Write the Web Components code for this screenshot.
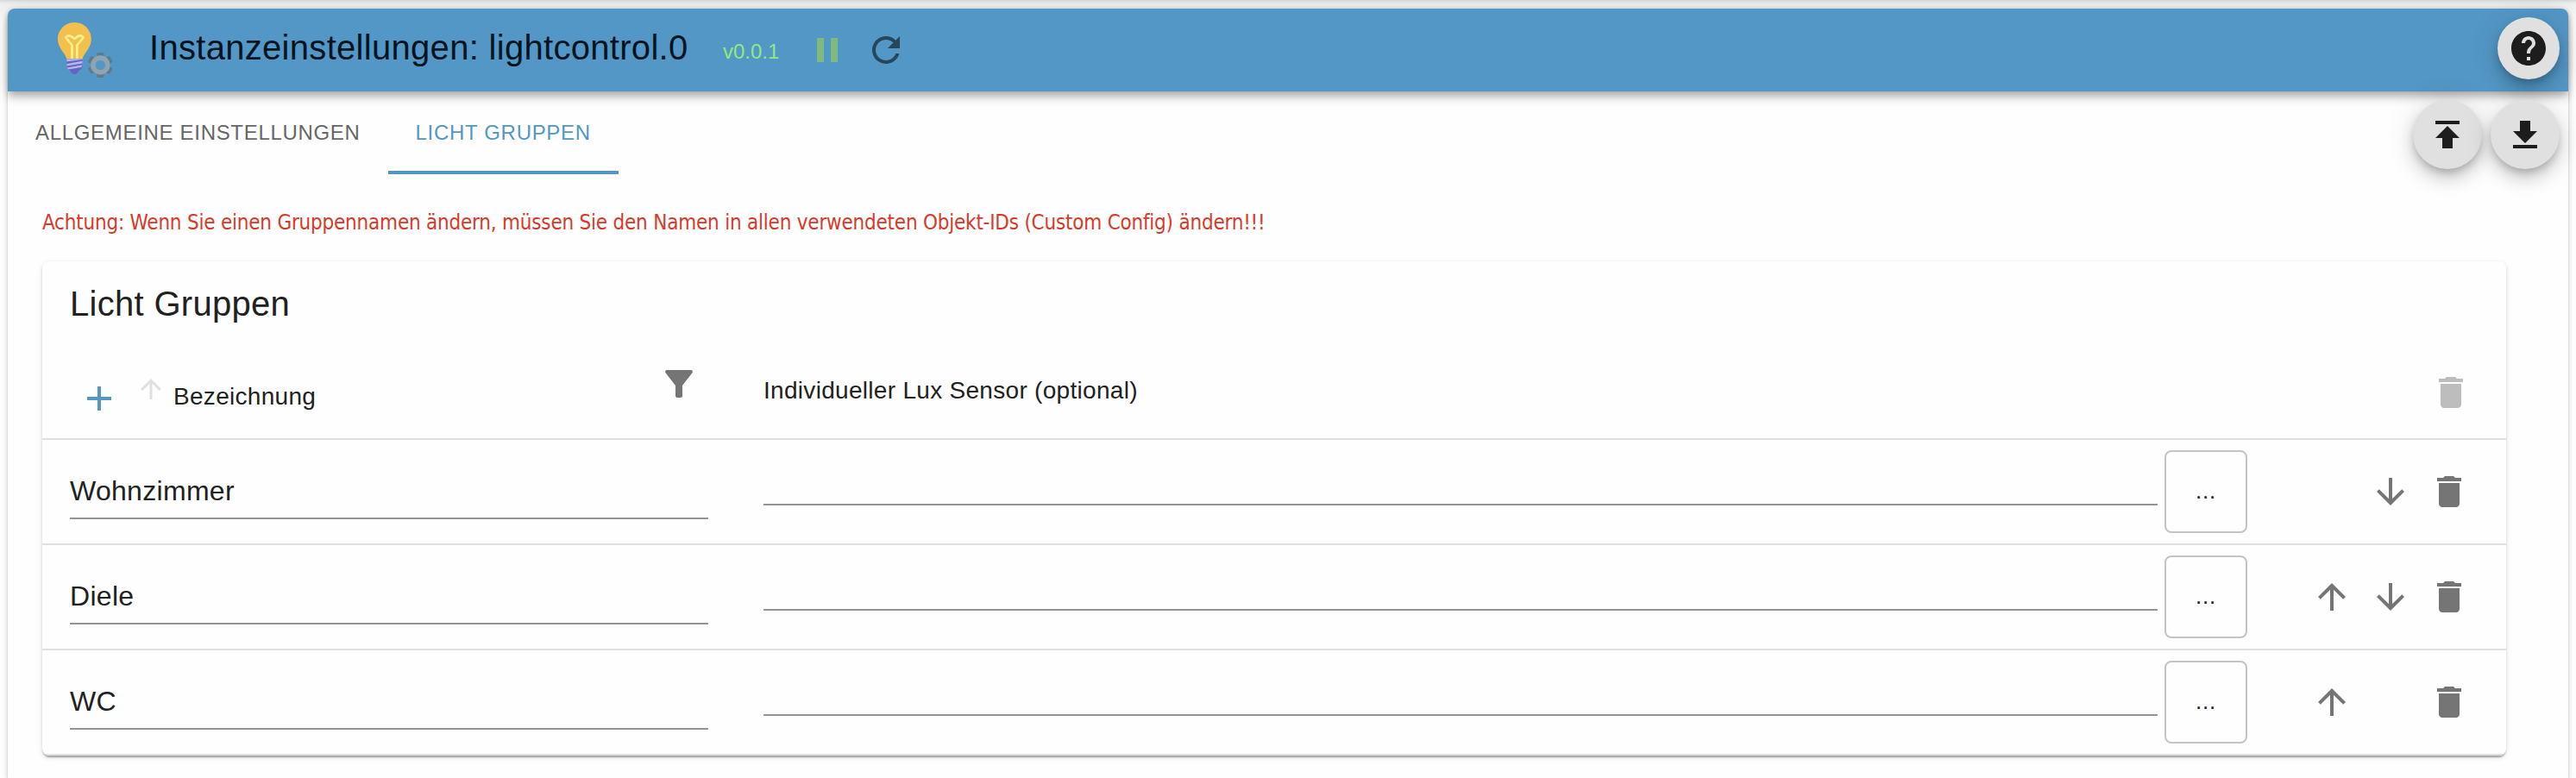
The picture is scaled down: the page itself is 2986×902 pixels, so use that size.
<!DOCTYPE html>
<html lang="de">
<head>
<meta charset="utf-8">
<title>Instanzeinstellungen: lightcontrol.0</title>
<style>
html,body{margin:0;padding:0;height:902px;overflow:hidden}
body{background:#fefefe;font-family:"Liberation Sans",Arial,sans-serif;color:#212121}
</style>
</head>
<body>
<settings-page></settings-page>
<script>
const ICONS={
 pause:'M6 19h4V5H6v14zm8-14v14h4V5h-4z',
 refresh:'M17.65 6.35C16.2 4.9 14.21 4 12 4c-4.42 0-7.99 3.58-7.99 8s3.57 8 7.99 8c3.73 0 6.84-2.55 7.73-6h-2.08c-.82 2.33-3.04 4-5.65 4-3.31 0-6-2.69-6-6s2.69-6 6-6c1.66 0 3.14.69 4.22 1.78L13 11h7V4l-2.35 2.35z',
 help:'M12 2C6.48 2 2 6.48 2 12s4.48 10 10 10 10-4.48 10-10S17.52 2 12 2zm1 17h-2v-2h2v2zm2.07-7.75l-.9.92C13.45 12.9 13 13.5 13 15h-2v-.5c0-1.1.45-2.1 1.17-2.83l1.24-1.26c.37-.36.59-.86.59-1.41 0-1.1-.9-2-2-2s-2 .9-2 2H8c0-2.21 1.79-4 4-4s4 1.79 4 4c0 .88-.36 1.68-.93 2.25z',
 publish:'M5 4v2h14V4H5zm0 10h4v6h6v-6h4l-7-7-7 7z',
 download:'M5 20v-2h14v2H5zm0-10h4V4h6v6h4l-7 7-7-7z',
 add:'M19 13h-6v6h-2v-6H5v-2h6V5h2v6h6v2z',
 up:'M4 12l1.41 1.41L11 7.83V20h2V7.83l5.58 5.59L20 12l-8-8-8 8z',
 down:'M20 12l-1.41-1.41L13 16.17V4h-2v12.17l-5.58-5.59L4 12l8 8 8-8z',
 filter:'M4.25 5.61C6.27 8.2 10 13 10 13v6c0 .55.45 1 1 1h2c.55 0 1-.45 1-1v-6s3.72-4.8 5.74-7.39C20.25 4.95 19.78 4 18.95 4H5.04c-.83 0-1.3.95-.79 1.61z',
 trash:'M6 19c0 1.1.9 2 2 2h8c1.1 0 2-.9 2-2V7H6v12zM19 4h-3.5l-1-1h-5l-1 1H5v2h14V4z'
};
const define=(name,render)=>customElements.define(name,class extends HTMLElement{
 connectedCallback(){ if(!this.shadowRoot) this.attachShadow({mode:'open'}).innerHTML=render(this); }
});

define('md-icon',el=>`<style>:host{display:block;flex:none;width:48px;height:48px}svg{display:block;width:100%;height:100%;fill:currentColor}</style>
<svg viewBox="0 0 24 24"><path d="${ICONS[el.getAttribute('name')]}"/></svg>`);

const TEETH=[0,60,120,180,240,300].map(a=>`<path d="M-3.600-14.500h7.200l1 5h-9.200z" transform="rotate(${a})"/>`).join('');
define('adapter-logo',()=>`<style>:host{display:block;flex:none;width:64px;height:66px}svg{display:block}</style>
<svg width="64" height="66" viewBox="0 0 64 66">
<path d="M19.400 0C8.700 0 0 8.500 0 19.200c0 7.300 4 12 6.800 16.300 2 3 2.900 4.500 3.500 7h18.200c.6-2.500 1.500-4 3.500-7 2.800-4.300 6.800-9 6.800-16.300C38.800 8.500 30.100 0 19.400 0z" fill="#f3c04d"/>
<path d="M16.500 42.500V26.500L9.200 17.500c1.800-2.200 4.200-3 6.200-1.300l4 2.800 4-2.800c2-1.700 4.400-.9 6.200 1.300L22.300 26.500V42.500" fill="none" stroke="#fdf08c" stroke-width="2.700" stroke-linejoin="round" stroke-linecap="round"/>
<path d="M10.300 42.300h18.200v8.200c0 3-2.500 4.500-4.500 5.800-.8 2.500-2.300 3.700-4.600 3.700s-3.800-1.200-4.600-3.700c-2-1.300-4.500-2.800-4.500-5.800z" fill="#6264c0"/>
<path d="M10.300 45.500v-3.200h18.200v.7zM10.300 50.500v-2.500l18.200-3.200v2.700zM12 54.500l-1.500-2 18-3.300-1.200 2.800z" fill="#b5b5ea"/>
<g transform="translate(49.300 49.400)"><g fill="#5d7b8c">${TEETH}</g><circle r="8.500" fill="none" stroke="#91a3ae" stroke-width="5.500"/></g>
</svg>`);

define('round-button',el=>`<style>:host{display:grid;place-items:center;flex:none;box-sizing:border-box;width:80px;height:80px;border-radius:50%;background:#e0e0e0;color:#1d1d1d;
box-shadow:0 6px 10px -2px rgba(0,0,0,.2),0 12px 20px 0 rgba(0,0,0,.14),0 2px 36px 0 rgba(0,0,0,.12)}
:host([small]){width:72px;height:72px}</style><md-icon name="${el.getAttribute('icon')}"></md-icon>`);

define('app-header',()=>`<style>
:host{display:flex;align-items:flex-start;box-sizing:border-box;height:96px;padding:0 10px 0 58px;border-radius:8px 8px 0 0;background:#5397c6;color:#04141f;
box-shadow:0 4px 8px -2px rgba(0,0,0,.2),0 8px 10px 0 rgba(0,0,0,.14),0 2px 20px 0 rgba(0,0,0,.12)}
adapter-logo{margin-top:16px}
h1{margin:0 0 0 42px;padding-top:22px;width:625px;font:400 40px/46px "Liberation Sans",Arial,sans-serif;letter-spacing:.3px;white-space:nowrap}
.v{margin-left:40px;padding-top:36px;width:66px;font-size:24px;line-height:28px;color:#90e880;white-space:nowrap}
.p{margin:24px 0 0 31px;color:#7fb97c}.r{margin:24px 0 0 20px;color:#26465c}
.help{margin:10px 0 0 auto}
</style><adapter-logo></adapter-logo><h1>Instanzeinstellungen: lightcontrol.0</h1><span class="v">v0.0.1</span><md-icon class="p" name="pause"></md-icon><md-icon class="r" name="refresh"></md-icon><round-button class="help" small icon="help"></round-button>`);

define('nav-tab',()=>`<style>:host{display:flex;align-items:center;box-sizing:border-box;height:96px;padding:0 32px;border-bottom:4px solid transparent;font-size:24px;line-height:28px;letter-spacing:.686px;color:#666;white-space:nowrap}
span{padding-top:3px}
:host([active]){color:#5397c6;border-color:#5397c6}</style><span><slot></slot></span>`);

define('tab-bar',()=>`<style>:host{display:flex;height:96px;padding-right:10px}
.tools{display:flex;gap:10px;margin:10px 0 0 auto}</style>
<slot></slot><div class="tools"><round-button icon="publish"></round-button><round-button icon="download"></round-button></div>`);

define('warning-text',()=>`<style>:host{display:block;margin:38px 0 0 40px;height:36px;font:24px/36px "DejaVu Sans Condensed","DejaVu Sans",sans-serif;font-stretch:semi-condensed;letter-spacing:-.22px;color:#d63a29;white-space:nowrap}</style><slot></slot>`);

const GRID='display:grid;grid-template-columns:740px 1680px 96px 1fr 194px;box-sizing:border-box;padding:0 32px;border-bottom:2px solid #e0e0e0;';
define('group-head',()=>`<style>:host{${GRID}height:121px;font-size:28px;line-height:32px;letter-spacing:.3px}
.name{display:flex;padding:0 10px}
.add{margin-top:49px;color:#5397c6}
.sort{width:36px;height:36px;margin:44px 0 0 18px;color:#e0e0e0}
.name span{margin:55px 0 0 8px}
.filter{margin:32px 0 0 auto;color:#757575}
.lux{padding:48px 0 0 64px;white-space:nowrap}
.trash{grid-column:5;justify-self:end;margin:42px 8px 0 0;color:#bdbdbd}
</style><div class="name"><md-icon class="add" name="add"></md-icon><md-icon class="sort" name="up"></md-icon><span>Bezeichnung</span><md-icon class="filter" name="filter"></md-icon></div>
<div class="lux">Individueller Lux Sensor (optional)</div><md-icon class="trash" name="trash"></md-icon>`);

define('group-row',el=>`<style>:host{${GRID}height:122px;align-items:start}
.name{box-sizing:border-box;height:92px;padding-top:40px;border-bottom:2px solid #949494;font-size:32px;line-height:38px;letter-spacing:.3px}
.lux{height:74px;margin:0 0 0 64px;border-bottom:2px solid #949494}
.name,.lux{white-space:nowrap}
.pick{box-sizing:border-box;display:flex;justify-content:center;height:96px;margin:12px -8px 0 8px;padding-top:23px;border:2px solid #c4c4c4;border-radius:8px;font-size:26px;line-height:44px;letter-spacing:.8px}
.acts{grid-column:5;display:grid;grid-template-columns:repeat(3,48px);gap:20px;margin:36px 0 0;color:#757575}
.up{grid-area:1/1}.down{grid-area:1/2}.del{grid-area:1/3}
</style><div class="name"><slot></slot></div><div class="lux"></div><div class="pick">...</div>
<div class="acts">${el.hasAttribute('up')?'<md-icon class="up" name="up"></md-icon>':''}${el.hasAttribute('down')?'<md-icon class="down" name="down"></md-icon>':''}<md-icon class="del" name="trash"></md-icon></div>`);

define('group-card',()=>`<style>:host{display:block;box-sizing:border-box;width:2856px;height:573px;margin:27px 0 0 40px;border-radius:8px;background:#fefefe;overflow:hidden;
box-shadow:0 4px 2px -2px rgba(0,0,0,.2),0 2px 2px 0 rgba(0,0,0,.14),0 2px 6px 0 rgba(0,0,0,.12)}
h2{margin:0;box-sizing:border-box;height:86px;padding:26px 32px 0;font:400 40px/46px "Liberation Sans",Arial,sans-serif;letter-spacing:.3px}</style>
<h2>Licht Gruppen</h2><slot></slot>`);

define('settings-page',()=>`<style>
:host{display:block;box-sizing:border-box;width:2986px;height:902px;padding:10px 9px 0;overflow:hidden;background:linear-gradient(#d3d9d7,#eaebeb 3px,#f1f1f1 5px,#f3f3f3 10px,#fdfdfd 26px,#fdfdfd)}
main{height:892px;border-radius:8px 8px 0 0;background:#fefefe;box-shadow:0 2px 2px 0 rgba(0,0,0,.14),0 2px 6px 0 rgba(0,0,0,.2)}
</style><main><app-header></app-header>
<tab-bar><nav-tab>ALLGEMEINE EINSTELLUNGEN</nav-tab><nav-tab active>LICHT GRUPPEN</nav-tab></tab-bar>
<warning-text>Achtung: Wenn Sie einen Gruppennamen ändern, müssen Sie den Namen in allen verwendeten Objekt-IDs (Custom Config) ändern!!!</warning-text>
<group-card><group-head></group-head><group-row down>Wohnzimmer</group-row><group-row up down>Diele</group-row><group-row up>WC</group-row></group-card></main>`);
</script>
</body>
</html>
